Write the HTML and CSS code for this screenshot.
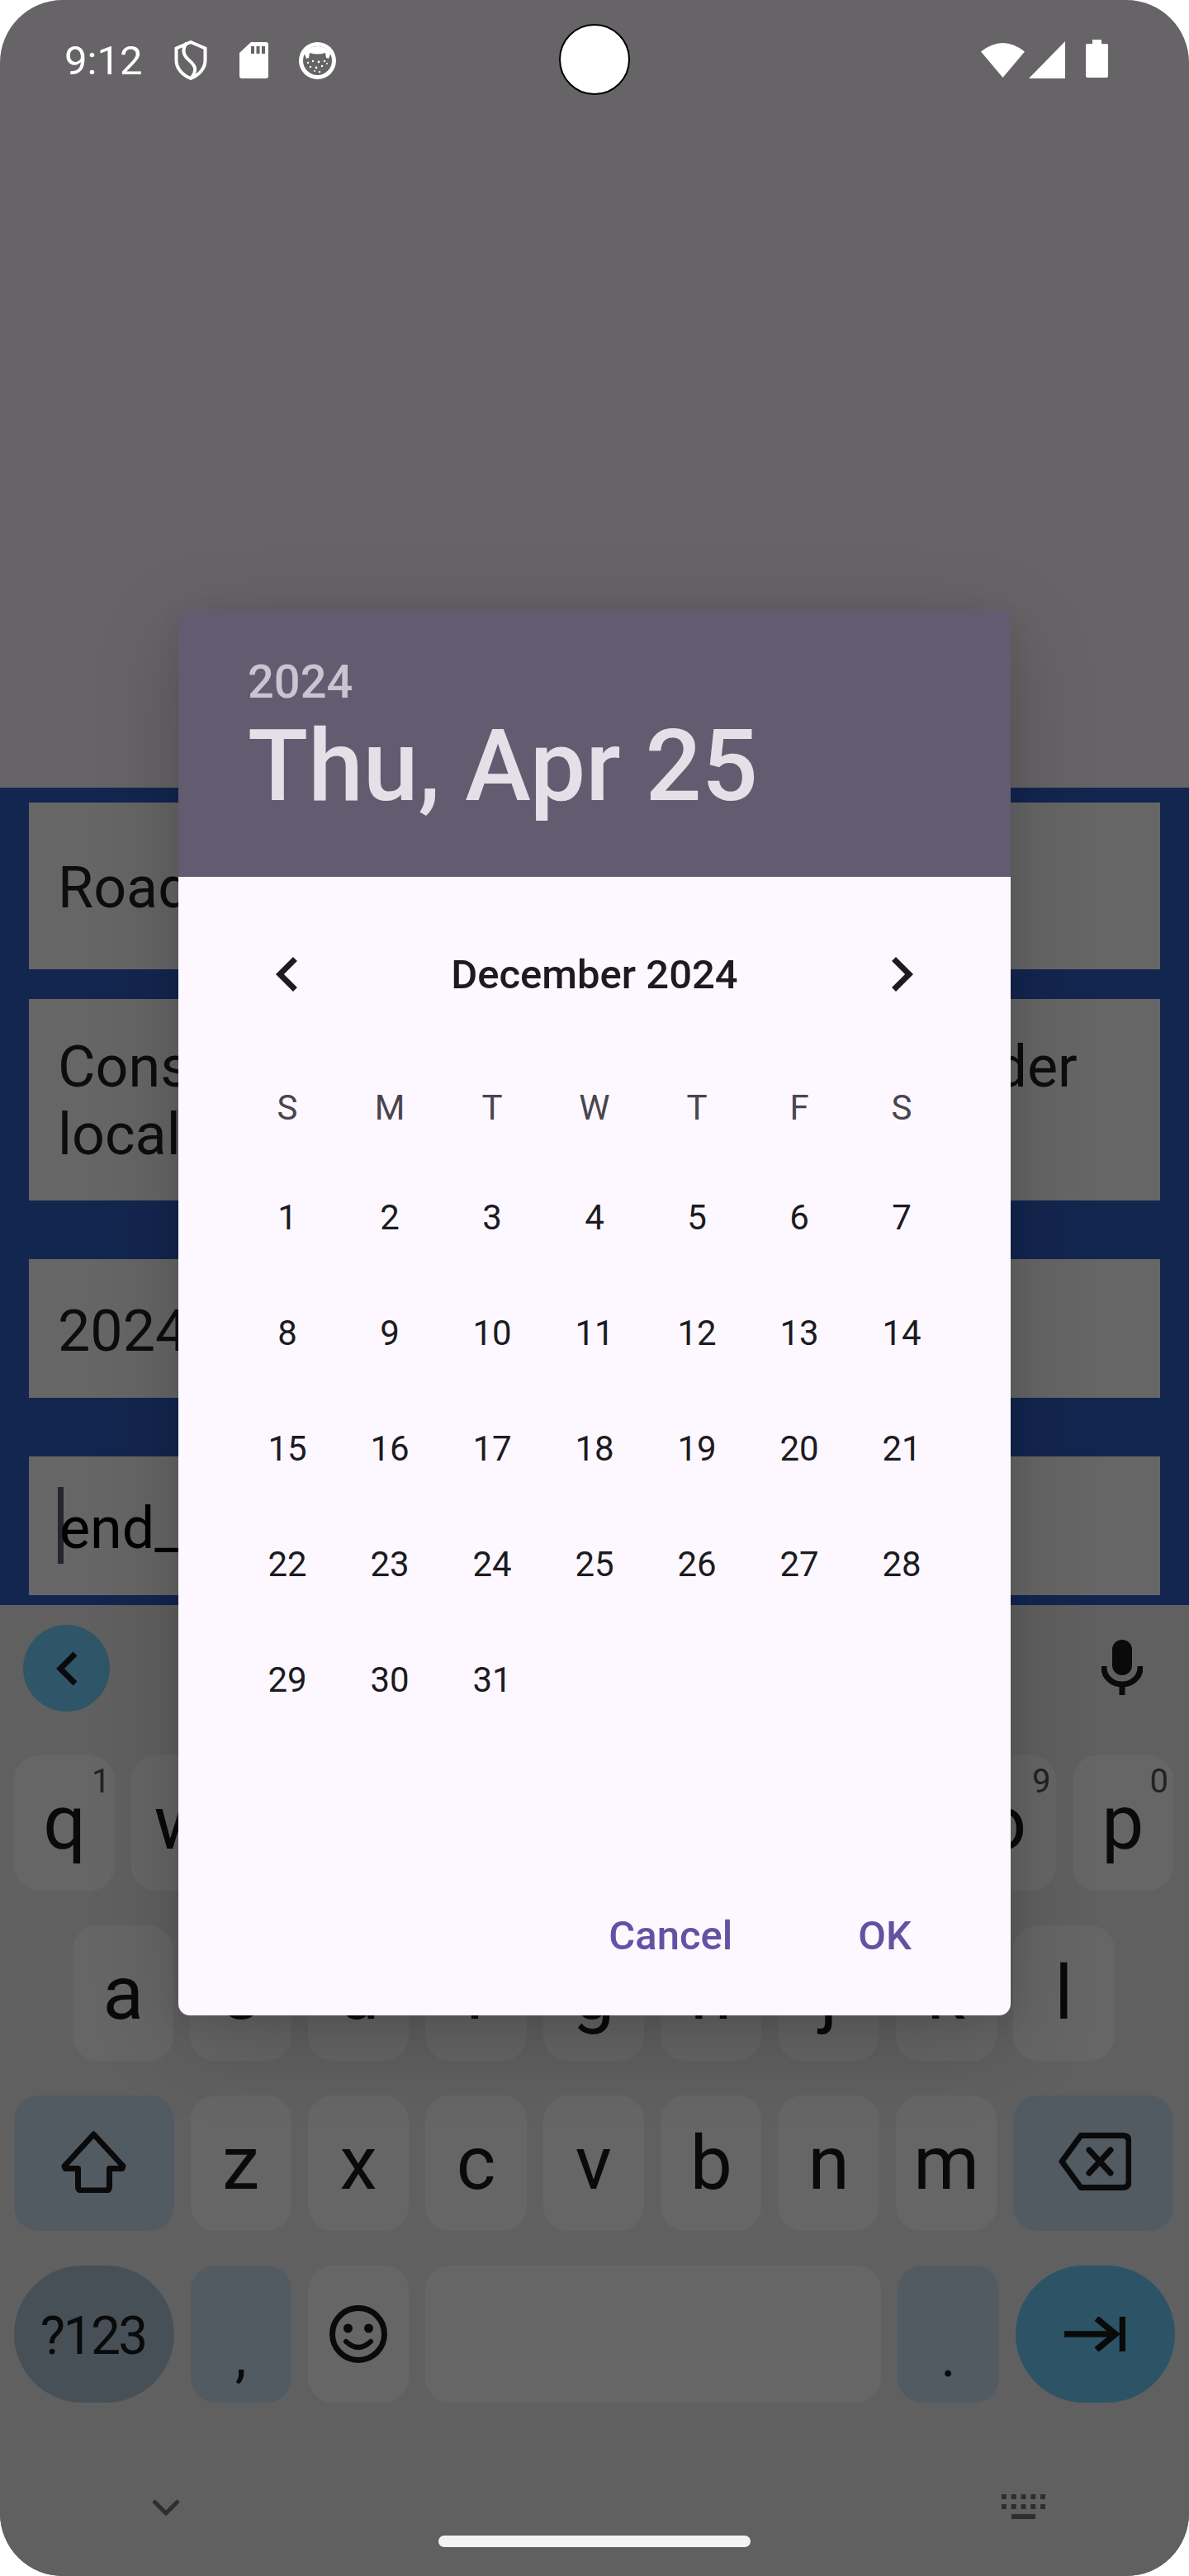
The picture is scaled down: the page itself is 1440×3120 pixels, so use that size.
FILE: index.html
```html
<!DOCTYPE html>
<html lang="en">
<head>
<meta charset="utf-8">
<title>Date picker</title>
<link rel="stylesheet" href="styles.css">
</head>
<body>
<div class="screen">
  <header class="status">
    <span class="clock">9:12</span>
    <svg class="ic-shield" viewBox="0 0 40 48"><path class="st-w" d="M20 2 37.500 9.500V24C37.500 34 30 42 20 46 10 42 2.500 34 2.500 24V9.500Z"/><path class="st-w" d="M15 3C9 11 11 18 18 24 25 30 29 36 20 46"/></svg>
    <svg class="ic-sd" viewBox="0 0 35 44"><path class="fill-w" d="M14 0H32Q35 0 35 3V41Q35 44 32 44H3Q0 44 0 41V13ZM14 5V14H18V5ZM20.500 5V14H24.500V5ZM27 5V14H31V5Z" fill-rule="evenodd"/></svg>
    <svg class="ic-cat" viewBox="0 0 45 45"><circle class="fill-w" cx="22.500" cy="22.500" r="22.500"/><circle class="fill-d" cx="22.500" cy="22.500" r="17.500"/><path class="fill-w" d="M6 12Q22.500-2 39 12L36 20 33 19 32 13Q22.500 16 13 13L12 19 9 20Z"/><g class="fill-w"><circle cx="11" cy="25" r="1.200"/><circle cx="17" cy="23" r="1.200"/><circle cx="24" cy="24" r="1.400"/><circle cx="31" cy="23" r="1.200"/><circle cx="34" cy="26" r="1"/><circle cx="14" cy="30" r="1.200"/><circle cx="21" cy="31" r="1.400"/><circle cx="28" cy="29" r="1.200"/><circle cx="19" cy="35" r="1"/><circle cx="25" cy="36" r="1.200"/></g></svg>
    <span class="status-gap"></span>
    <svg class="ic-wifi" viewBox="0 0 53 44"><path class="fill-w" d="M0 12.500Q26.500-8.500 53 12.500L26.500 44Z"/></svg>
    <svg class="ic-signal" viewBox="0 0 44 45"><path class="fill-w" d="M44 0V45H0Z"/></svg>
    <svg class="ic-batt" viewBox="0 0 27 46"><path class="fill-w" d="M8 0H19V5H25Q27 5 27 7V44Q27 46 25 46H2Q0 46 0 44V7Q0 5 2 5H8Z"/></svg>
  </header>

  <main class="form">
    <div class="field field-road">Roadworks</div>
    <div class="field field-desc">Construction in progress on route under local supervision</div>
    <div class="field field-start">2024-04-25</div>
    <div class="field field-end"><span class="caret"></span>end_date</div>
  </main>

  <section class="keyboard">
    <div class="kb-tools">
      <span class="tool-back"><svg class="ic-back" viewBox="0 0 26 42"><path d="M23 3 5 21 23 39"/></svg></span>
      <svg class="ic-mic" viewBox="0 0 50 67"><rect x="13" y="0" width="24" height="43" rx="12"/><path class="mic-arc" d="M3 32V34A22 20 0 0 0 47 34V32"/><path class="mic-stem" d="M25 54V67"/></svg>
    </div>
    <div class="kb-rows">
      <div class="row row-one">
        <span class="key">q<i>1</i></span><span class="key">w<i>2</i></span><span class="key">e<i>3</i></span><span class="key">r<i>4</i></span><span class="key">t<i>5</i></span><span class="key">y<i>6</i></span><span class="key">u<i>7</i></span><span class="key">i<i>8</i></span><span class="key">o<i>9</i></span><span class="key">p<i>0</i></span>
      </div>
      <div class="row row-two">
        <span class="key">a</span><span class="key">s</span><span class="key">d</span><span class="key">f</span><span class="key">g</span><span class="key">h</span><span class="key">j</span><span class="key">k</span><span class="key">l</span>
      </div>
      <div class="row row-three">
        <span class="key key-wide key-mod"><svg class="ic-shift" viewBox="0 0 79 75"><path d="M39.500 4 75 42.500 74 45.500H58.500V67Q58.500 72 54 72H25Q20.500 72 20.500 67V45.500H5L4 42.500Z"/></svg></span>
        <span class="key">z</span><span class="key">x</span><span class="key">c</span><span class="key">v</span><span class="key">b</span><span class="key">n</span><span class="key">m</span>
        <span class="key key-wide key-mod"><svg class="ic-del" viewBox="0 0 88 70"><path d="M27 3.500H78Q85 3.500 85 10.500V59.500Q85 66.500 78 66.500H27L4 35Z"/><path d="M37 21 63 49M63 21 37 49" stroke-linecap="round"/></svg></span>
      </div>
      <div class="row">
        <span class="key key-wide key-pill key-sym">?123</span>
        <span class="key key-mod key-punct">,</span>
        <span class="key"><svg class="ic-emoji" viewBox="0 0 70 70"><circle class="emo-ring" cx="35" cy="35" r="31.500"/><circle class="emo-eye" cx="22.500" cy="28" r="5.500"/><circle class="emo-eye" cx="47.500" cy="28" r="5.500"/><path class="emo-smile" d="M20 44Q35 58 50 44"/></svg></span>
        <span class="key key-space"></span>
        <span class="key key-mod key-punct">.</span>
        <span class="key key-wide key-pill key-enter"><svg class="ic-next" viewBox="0 0 74 42"><path d="M0 21H62M39 2 62 21 39 40"/><path d="M70.500 0V42"/></svg></span>
      </div>
    </div>
    <footer class="nav">
      <svg class="ic-down" viewBox="0 0 34 20"><path d="M2 2 17 17 32 2"/></svg>
      <span class="home-bar"></span>
      <svg class="ic-kbd" viewBox="0 0 53 30"><path d="M0 0H6V6H0ZM11.750 0H17.750V6H11.750ZM23.500 0H29.500V6H23.500ZM35.250 0H41.250V6H35.250ZM47 0H53V6H47ZM0 12H6V18H0ZM11.750 12H17.750V18H11.750ZM23.500 12H29.500V18H23.500ZM35.250 12H41.250V18H35.250ZM47 12H53V18H47ZM12 24H41V30H12Z"/></svg>
    </footer>
  </section>

  <span class="camera"></span>

  <div class="dialog" role="dialog">
    <div class="dlg-head">
      <div class="dlg-year">2024</div>
      <div class="dlg-date">Thu, Apr 25</div>
    </div>
    <div class="dlg-body">
      <div class="month-bar">
        <svg class="chev" viewBox="0 0 24 24"><path d="M15.410 7.410 14 6l-6 6 6 6 1.410-1.410L10.830 12z"/></svg>
        <span class="month-name">December 2024</span>
        <svg class="chev" viewBox="0 0 24 24"><path d="M10 6 8.590 7.410 13.170 12l-4.580 4.580L10 18l6-6z"/></svg>
      </div>
      <div class="weekdays">
        <span>S</span><span>M</span><span>T</span><span>W</span><span>T</span><span>F</span><span>S</span>
      </div>
      <div class="days">
        <span>1</span><span>2</span><span>3</span><span>4</span><span>5</span><span>6</span><span>7</span>
        <span>8</span><span>9</span><span>10</span><span>11</span><span>12</span><span>13</span><span>14</span>
        <span>15</span><span>16</span><span>17</span><span>18</span><span>19</span><span>20</span><span>21</span>
        <span>22</span><span>23</span><span>24</span><span>25</span><span>26</span><span>27</span><span>28</span>
        <span>29</span><span>30</span><span>31</span>
      </div>
      <div class="actions">
        <span class="act">Cancel</span>
        <span class="act">OK</span>
      </div>
    </div>
  </div>
</div>
</body>
</html>
```
FILE: styles.css
```css
* { box-sizing: border-box; }
html, body { margin: 0; padding: 0; background: #fff; }
body { font-family: Roboto, "Liberation Sans", sans-serif; }
svg { display: block; flex: none; }

.screen {
  position: relative;
  width: 1440px;
  height: 3120px;
  overflow: hidden;
  border-radius: 76px;
  background: #666466;
  display: flex;
  flex-direction: column;
}

/* status bar */
.status {
  height: 954px;
  flex: none;
  display: flex;
  align-items: flex-start;
  padding: 48px 98px 0 78px;
  color: #fff;
}
.clock { font-size: 49px; line-height: 52px; margin-right: 39px; }
.status-gap { flex: 1; }
.fill-w { fill: #fff; }
.fill-d { fill: #666466; }
.st-w { fill: none; stroke: #fff; stroke-width: 4; }
.ic-shield { width: 40px; height: 48px; margin-top: 1px; margin-right: 39px; }
.ic-sd { width: 35px; height: 44px; margin-top: 3px; margin-right: 37px; }
.ic-cat { width: 45px; height: 45px; margin-top: 3px; }
.ic-wifi { width: 53px; height: 44px; margin-top: 2px; margin-right: 5px; }
.ic-signal { width: 44px; height: 45px; margin-top: 2px; margin-right: 25px; }
.ic-batt { width: 27px; height: 46px; }
.camera {
  position: absolute;
  left: 677px;
  top: 29px;
  width: 86px;
  height: 86px;
  border-radius: 50%;
  background: #fff;
  border: 2px solid #000;
}

/* form behind the dialog */
.form {
  height: 990px;
  flex: none;
  background: #13264f;
  padding: 18px 35px 0;
  display: flex;
  flex-direction: column;
  color: #0d0d0d;
}
.field {
  background: #666;
  font-size: 70px;
  line-height: 82px;
  padding: 0 35px;
  flex: none;
}
.field-road { height: 202px; padding-top: 62px; }
.field-desc { height: 244px; margin-top: 36px; padding-top: 41px; }
.field-start { height: 168px; margin-top: 71px; padding-top: 46px; }
.field-end { height: 168px; margin-top: 71px; padding-top: 46px; color: #000; }
.caret {
  display: inline-block;
  width: 7px;
  height: 93px;
  background: #262430;
  vertical-align: top;
  margin: -9px -5px 0 0;
}

/* keyboard */
.keyboard {
  flex: 1;
  background: #606060;
  display: flex;
  flex-direction: column;
  color: #0a0a0a;
}
.kb-tools {
  height: 182px;
  flex: none;
  padding: 24px 56px 0 28px;
  display: flex;
  justify-content: space-between;
  align-items: flex-start;
}
.tool-back {
  width: 105px;
  height: 105px;
  border-radius: 50%;
  background: #2f5568;
  display: flex;
  align-items: center;
  justify-content: center;
}
.ic-back { width: 26px; height: 42px; }
.ic-back path { fill: none; stroke: #0a0a0a; stroke-width: 7; }
.ic-mic { width: 50px; height: 67px; margin-top: 18px; fill: #0a0a0a; }
.mic-arc, .mic-stem { fill: none; stroke: #0a0a0a; stroke-width: 7; }

.kb-rows { display: flex; flex-direction: column; gap: 42px; padding-left: 17px; flex: none; }
.row { display: flex; gap: 20px; height: 166px; }
.row-one, .row-two, .row-three { height: 164px; }
.row-two { padding-left: 71px; }
.key {
  position: relative;
  flex: none;
  width: 122.400px;
  height: 100%;
  background: #666;
  border-radius: 30px;
  display: flex;
  align-items: center;
  justify-content: center;
  font-size: 91px;
  line-height: 1;
}
.key i {
  position: absolute;
  top: 10px;
  right: 6px;
  font-style: normal;
  font-size: 40px;
  line-height: 44px;
  color: #222;
}
.key-wide { width: 193.500px; }
.key-mod { background: #525a62; }
.key-space { width: 552px; }
.key-pill { border-radius: 83px; }
.key-sym { background: #475057; font-size: 64px; letter-spacing: -2.500px; padding-top: 6px; padding-right: 2px; }
.key-enter { background: #2d5366; }
.key-punct { font-size: 70px; padding-top: 54px; }
.ic-shift { width: 79px; height: 75px; margin-top: -4px; }
.ic-shift path { fill: none; stroke: #0a0a0a; stroke-width: 7; stroke-linejoin: round; }
.ic-del { width: 88px; height: 70px; margin-left: 5px; margin-top: -5px; }
.ic-del path { fill: none; stroke: #0a0a0a; stroke-width: 7; stroke-linejoin: round; }
.ic-emoji { width: 70px; height: 70px; }
.emo-ring { fill: none; stroke: #0a0a0a; stroke-width: 7; }
.emo-eye { fill: #0a0a0a; }
.emo-smile { fill: none; stroke: #0a0a0a; stroke-width: 6; stroke-linecap: round; }
.ic-next { width: 74px; height: 42px; }
.ic-next path { fill: none; stroke: #0a0a0a; stroke-width: 7.500; }

.nav { flex: 1; display: flex; align-items: flex-start; padding-left: 184px; }
.ic-down { width: 34px; height: 20px; margin-top: 117px; }
.ic-down path { fill: none; stroke: #2e2e2e; stroke-width: 5; }
.home-bar {
  width: 378px;
  height: 14px;
  margin: 161px 304px 0 313px;
  border-radius: 7px;
  background: #f3f3f3;
}
.ic-kbd { width: 53px; height: 30px; margin-top: 111px; fill: #2e2e2e; }

/* date picker dialog */
.dialog {
  position: absolute;
  left: 216px;
  top: 738px;
  width: 1008px;
  height: 1703px;
  border-radius: 14px;
  overflow: hidden;
  display: flex;
  flex-direction: column;
  box-shadow: 0 28px 110px rgba(0, 0, 0, .2), 0 8px 30px rgba(0, 0, 0, .06);
}
.dlg-head {
  height: 324px;
  flex: none;
  background: #635b70;
  padding: 55px 84px 0;
}
.dlg-year { font-size: 56px; line-height: 66px; font-weight: 500; color: #c9c4d0; }
.dlg-date { font-size: 120px; line-height: 139px; font-weight: 500; color: #e5e0e8; }
.dlg-body {
  flex: 1;
  background: #fdf8ff;
  display: flex;
  flex-direction: column;
  padding: 0 70px;
  color: #1c1b1f;
}
.month-bar {
  display: flex;
  align-items: center;
  justify-content: space-between;
  height: 84px;
  margin: 76px 20px 0;
  flex: none;
}
.chev { width: 84px; height: 84px; fill: #1c1b1f; }
.month-name { font-size: 49px; font-weight: 500; line-height: 58px; padding-top: 2px; }
.weekdays, .days {
  display: grid;
  grid-template-columns: repeat(7, 124px);
  justify-items: center;
  align-items: center;
  flex: none;
}
.weekdays { height: 126px; margin-top: 56px; font-size: 42px; color: #49454f; }
.days { grid-auto-rows: 140px; height: 840px; font-size: 42px; }
.actions {
  display: flex;
  justify-content: flex-end;
  gap: 152px;
  color: #6451a3;
  font-size: 49px;
  font-weight: 500;
  line-height: 58px;
  padding-right: 50px;
  margin-top: 72px;
}
```
